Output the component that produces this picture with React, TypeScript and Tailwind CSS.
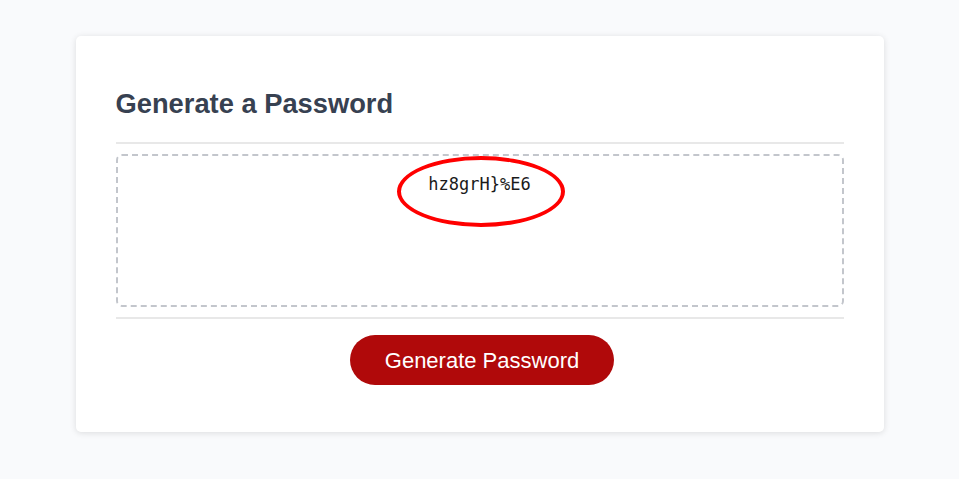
import React from 'react';

const App: React.FC = () => {
  const password = 'hz8grH}%E6';

  return (
    <div className="min-h-[479px] bg-[#f9fafc] pt-9 pb-12 font-['Liberation_Sans',Arial,sans-serif]">
      <div className="mx-auto w-[808px] rounded-[5px] bg-white px-10 pt-[52px] pb-[47px] shadow-[0_1px_6px_rgba(0,0,0,0.12)]">
        <h2 className="text-[27.3px] leading-[31px] font-bold text-[#374151]">Generate a Password</h2>

        <div className="mt-[23px] border-t-2 border-[#e8e8e8] pt-[10px] pb-[10px]">
          <div className="relative">
            <textarea
              readOnly
              value={password}
              className="block h-[153px] w-full resize-none rounded-[6px] border-2 border-dashed border-[#c3c6cc] bg-white pt-[16px] text-center font-['DejaVu_Sans_Mono',monospace] text-[17px] text-[#1a1a1a] outline-none"
            />
            {/* red circle annotation */}
            <div className="pointer-events-none absolute top-[2px] left-[281px] h-[71px] w-[168px] rounded-[50%] border-4 border-[#ff0000]" />
          </div>
        </div>

        <div className="flex justify-center border-t-2 border-[#e8e8e8] pt-[16px]">
          <button className="ml-[5px] h-[50px] rounded-full bg-[#b0090a] px-[35px] text-[22px] text-white">
            Generate Password
          </button>
        </div>
      </div>
    </div>
  );
};

export default App;
